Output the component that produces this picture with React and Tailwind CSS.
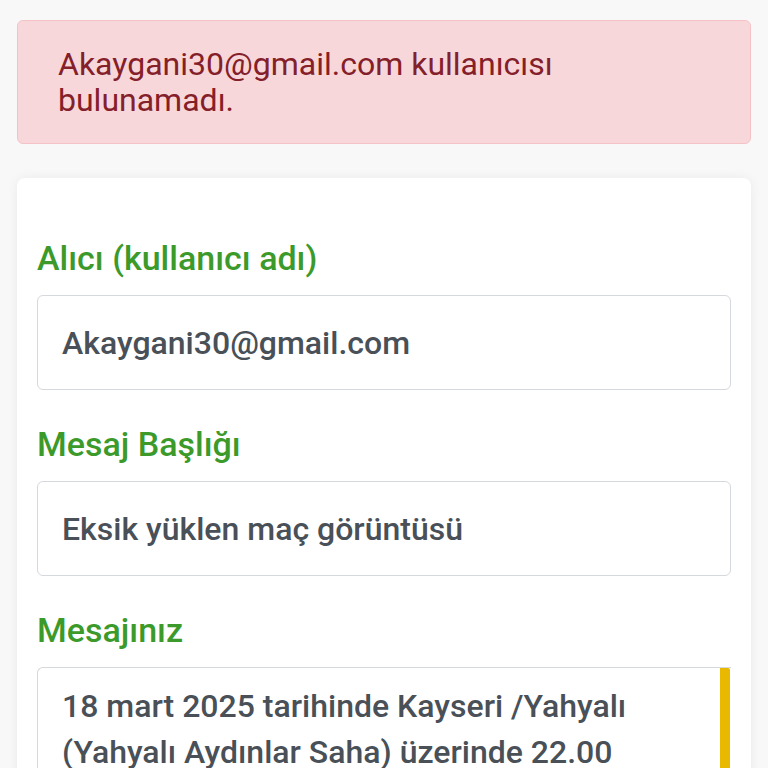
export default function App() {
  return (
    <div className="min-h-screen bg-[#f8f8f8] px-[17px] pt-[20px] font-['Roboto',sans-serif] overflow-hidden h-[768px]">
      <div className="rounded-[6px] border border-[#f5c2c7] bg-[#f8d7da] px-[40px] py-[25px] text-[32px] leading-[36px] text-[#842029]">
        Akaygani30@gmail.com kullanıcısı bulunamadı.
      </div>

      <div className="mt-[34px] rounded-[8px] bg-white px-[20px] pt-[60px] pb-6 shadow-[0_0_12px_rgba(0,0,0,0.06)]">
        <label className="block text-[34px] font-medium leading-[40px] text-[#3c9a2b]">Alıcı (kullanıcı adı)</label>
        <div className="mt-[17px] flex h-[95px] items-center rounded-[6px] border border-[#d5d8dc] px-[24px] text-[32px] font-medium text-[#495057]">
          Akaygani30@gmail.com
        </div>

        <label className="mt-[34px] block text-[34px] font-medium leading-[40px] text-[#3c9a2b]">Mesaj Başlığı</label>
        <div className="mt-[17px] flex h-[95px] items-center rounded-[6px] border border-[#d5d8dc] px-[24px] text-[32px] font-medium text-[#495057]">
          Eksik yüklen maç görüntüsü
        </div>

        <label className="mt-[34px] block text-[34px] font-medium leading-[40px] text-[#3c9a2b]">Mesajınız</label>
        <div className="mt-[17px] flex rounded-l-[6px] border border-r-0 border-[#d5d8dc]">
          <div className="flex-1 px-[24px] pt-[15px] text-[32px] font-medium leading-[46px] text-[#495057]">
            18 mart 2025 tarihinde Kayseri /Yahyalı (Yahyalı Aydınlar Saha) üzerinde 22.00 saatinde oynanan maçın görüntüleri eksik yüklenmiş.
          </div>
          <div className="w-[10px] shrink-0 rounded-tr-[2px] bg-[#e8b900]" />
          <div className="w-[1px]" />
        </div>
      </div>
    </div>
  );
}
